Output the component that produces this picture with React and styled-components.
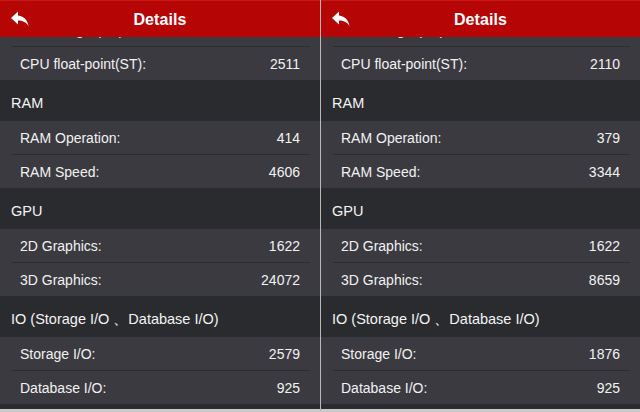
import React from 'react';
import styled, { createGlobalStyle } from 'styled-components';

const GlobalStyle = createGlobalStyle`
  html, body {
    margin: 0;
    padding: 0;
    background: #2a2b2e;
  }
  body {
    font-family: "Liberation Sans", Arial, sans-serif;
    -webkit-font-smoothing: antialiased;
  }
`

const Screen = styled.div`
  display: flex;
  width: 640px;
  height: 412px;
  overflow: hidden;
  background: #2a2b2e;
`
const Divider = styled.div`
  width: 1px;
  flex: none;
  background: #b9b9bb;
`
const Panel = styled.div`
  display: flex;
  flex-direction: column;
  width: ${props => props.width}px;
  flex: none;
  height: 100%;
`
const Header = styled.div`
  position: relative;
  z-index: 1;
  display: flex;
  align-items: center;
  justify-content: center;
  height: 37px;
  flex: none;
  background: #b50505;
  border-top: 1px solid #c41a1a;
  box-sizing: border-box;
`
const BackButton = styled.div`
  position: absolute;
  left: 11px;
  top: 10px;
  width: 18px;
  height: 16px;
  display: flex;
`
const Title = styled.div`
  color: #ffffff;
  font-size: 16px;
  font-weight: bold;
  letter-spacing: 0.1px;
  padding-top: 2px;
`
const Content = styled.div`
  flex: 1;
  overflow: hidden;
  display: flex;
  flex-direction: column;
`
const Group = styled.div`
  background: #3a3a40;
  display: flex;
  flex-direction: column;
  margin-top: ${props => props.offset || 0}px;
`
const Row = styled.div`
  display: flex;
  align-items: center;
  justify-content: space-between;
  height: 33px;
  flex: none;
  margin: 0 10px 0 12px;
  padding: 0 0 0 8px;
  box-sizing: content-box;
  color: #f2f2f2;
  font-size: 14px;
  border-top: ${props => (props.first ? 'none' : '1px solid #2c2c31')};
`
const Value = styled.span`
  padding-right: 10px;
`
const SectionTitle = styled.div`
  display: flex;
  align-items: center;
  height: 41px;
  flex: none;
  padding: 5px 0 0 11px;
  box-sizing: border-box;
  color: #f4f4f4;
  font-size: 14.5px;
  background: #2a2b2e;
`
const BottomEdge = styled.div`
  margin-top: auto;
  height: 3px;
  flex: none;
  background: #c9c9cb;
`

const BackIcon = () => (
  <svg width="18" height="16" viewBox="0 0 18 16">
    <path d="M7 0.5 L0 7 L7 13.5 V9.6 C11.5 9.6 14.8 11 17.5 15 C16.6 9.8 13.4 5.4 7 4.6 Z" fill="#ffffff" />
  </svg>
)

const sections = [
  { title: 'RAM', key: 'ram', rows: [['RAM Operation:', 'ramOp'], ['RAM Speed:', 'ramSpeed']] },
  { title: 'GPU', key: 'gpu', rows: [['2D Graphics:', 'g2d'], ['3D Graphics:', 'g3d']] },
  { title: 'IO (Storage I/O 、Database I/O)', key: 'io', rows: [['Storage I/O:', 'storage'], ['Database I/O:', 'db']] },
]

const Details = ({ data, width }) => (
  <Panel width={width}>
    <Header>
      <BackButton><BackIcon /></BackButton>
      <Title>Details</Title>
    </Header>
    <Content>
      <Group offset={-24}>
        <Row first>
          <span>CPU integer(ST):</span>
          <Value>{data.intST}</Value>
        </Row>
        <Row>
          <span>CPU float-point(ST):</span>
          <Value>{data.floatST}</Value>
        </Row>
      </Group>
      {sections.map(section => (
        <React.Fragment key={section.key}>
          <SectionTitle>{section.title}</SectionTitle>
          <Group>
            {section.rows.map(([label, field], index) => (
              <Row key={field} first={index === 0}>
                <span>{label}</span>
                <Value>{data[field]}</Value>
              </Row>
            ))}
          </Group>
        </React.Fragment>
      ))}
      <BottomEdge />
    </Content>
  </Panel>
)

const left = { intST: '2736', floatST: '2511', ramOp: '414', ramSpeed: '4606', g2d: '1622', g3d: '24072', storage: '2579', db: '925' }
const right = { intST: '2387', floatST: '2110', ramOp: '379', ramSpeed: '3344', g2d: '1622', g3d: '8659', storage: '1876', db: '925' }

export default function App() {
  return (
    <>
      <GlobalStyle />
      <Screen>
        <Details data={left} width={320} />
        <Divider />
        <Details data={right} width={319} />
      </Screen>
    </>
  )
}
